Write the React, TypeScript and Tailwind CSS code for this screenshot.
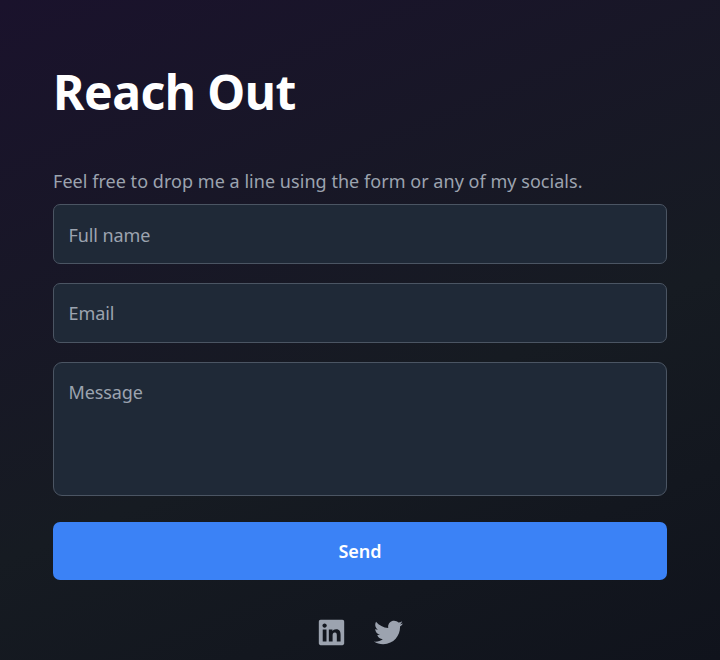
import { FaLinkedin, FaTwitter } from "react-icons/fa";

const field = "block w-full border border-[#4b5563] bg-[#1f2937] pl-[14.5px] pr-[15px] text-[18px] tracking-[-0.1px] text-white placeholder-[#9ca3af] outline-none";

export default function App() {
  return (
    <main className="h-[660px] w-full overflow-hidden bg-[linear-gradient(158deg,#1a122c_0%,#161b22_59%,#10131c_100%)] px-[53px] pt-[62px] font-['Noto_Sans',sans-serif]">
      <h1 className="h-[60px] text-[48px] font-bold leading-[60px] tracking-[-0.5px] text-white">Reach Out</h1>
      <p className="mt-[45px] h-[28px] text-[18px] leading-[28px] tracking-[0.04px] text-[#9ca3af]">Feel free to drop me a line using the form or any of my socials.</p>
      <form className="mt-[9px]">
        <input className={`${field} h-[60px] rounded-[7px] pt-[2px]`} placeholder="Full name" />
        <input className={`${field} mt-[19px] h-[60px] rounded-[7px]`} placeholder="Email" />
        <textarea className={`${field} mt-[19px] h-[134px] resize-none rounded-[9px] pt-[15px] leading-[28px]`} placeholder="Message" />
        <button type="button" className="mt-[26px] h-[58px] w-full rounded-[7px] bg-[#3b82f6] text-[18px] font-semibold text-white">Send</button>
      </form>
      <div className="mt-[38px] flex justify-center gap-[28px] text-[#9ca3af]">
        <FaLinkedin size={29} />
        <FaTwitter size={29} />
      </div>
    </main>
  );
}
